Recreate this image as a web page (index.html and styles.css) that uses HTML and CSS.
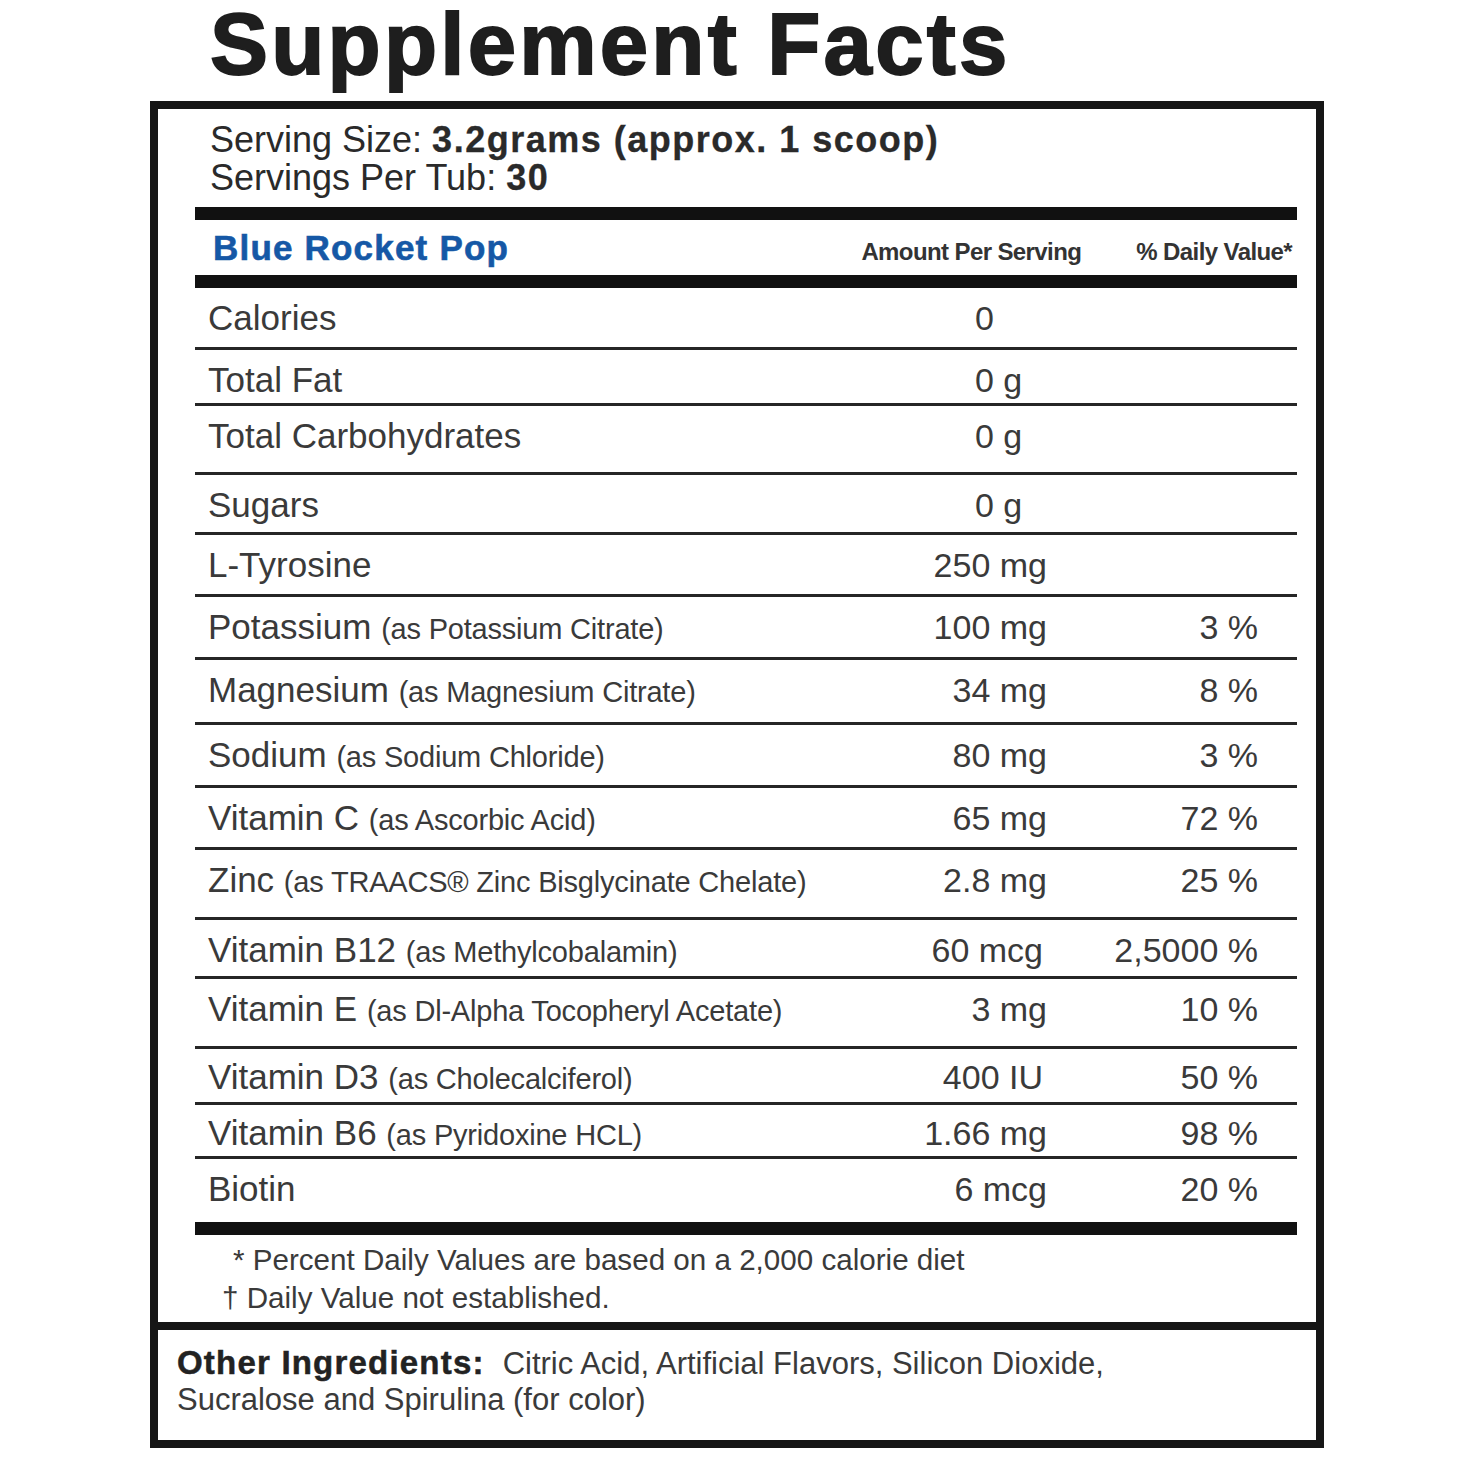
FILE: index.html
```html
<!DOCTYPE html>
<html lang="en">
<head>
<meta charset="utf-8">
<title>Supplement Facts</title>
<link rel="stylesheet" href="styles.css">
</head>
<body>
<div class="page">
  <h1 class="title">Supplement Facts</h1>
  <div class="label">
    <section class="facts">
      <div class="serving">
        <div class="serving-line">Serving Size: <b>3.2grams (approx. 1 scoop)</b></div>
        <div class="serving-line">Servings Per Tub: <b>30</b></div>
      </div>
      <div class="bar"></div>
      <div class="head">
        <span class="flavor">Blue Rocket Pop</span>
        <span class="h-amt">Amount Per Serving</span>
        <span class="h-dv">% Daily Value*</span>
      </div>
      <div class="bar"></div>
      <div class="rows">
        <div class="row"><span class="name">Calories</span><span class="amt amt-l">0</span><span class="dv"></span></div>
        <div class="row"><span class="name">Total Fat</span><span class="amt amt-l">0 g</span><span class="dv"></span></div>
        <div class="row"><span class="name">Total Carbohydrates</span><span class="amt amt-l">0 g</span><span class="dv"></span></div>
        <div class="row"><span class="name">Sugars</span><span class="amt amt-l">0 g</span><span class="dv"></span></div>
        <div class="row"><span class="name">L-Tyrosine</span><span class="amt">250 mg</span><span class="dv"></span></div>
        <div class="row"><span class="name">Potassium <small>(as Potassium Citrate)</small></span><span class="amt">100 mg</span><span class="dv">3 %</span></div>
        <div class="row"><span class="name">Magnesium <small>(as Magnesium Citrate)</small></span><span class="amt">34 mg</span><span class="dv">8 %</span></div>
        <div class="row"><span class="name">Sodium <small>(as Sodium Chloride)</small></span><span class="amt">80 mg</span><span class="dv">3 %</span></div>
        <div class="row"><span class="name">Vitamin C <small>(as Ascorbic Acid)</small></span><span class="amt">65 mg</span><span class="dv">72 %</span></div>
        <div class="row"><span class="name">Zinc <small>(as TRAACS® Zinc Bisglycinate Chelate)</small></span><span class="amt">2.8 mg</span><span class="dv">25 %</span></div>
        <div class="row"><span class="name">Vitamin B12 <small>(as Methylcobalamin)</small></span><span class="amt amt-r4">60 mcg</span><span class="dv">2,5000 %</span></div>
        <div class="row"><span class="name">Vitamin E <small>(as Dl-Alpha Tocopheryl Acetate)</small></span><span class="amt">3 mg</span><span class="dv">10 %</span></div>
        <div class="row row-high"><span class="name">Vitamin D3 <small>(as Cholecalciferol)</small></span><span class="amt amt-r4">400 IU</span><span class="dv">50 %</span></div>
        <div class="row row-high"><span class="name">Vitamin B6 <small>(as Pyridoxine HCL)</small></span><span class="amt">1.66 mg</span><span class="dv">98 %</span></div>
        <div class="row row-last"><span class="name">Biotin</span><span class="amt">6 mcg</span><span class="dv">20 %</span></div>
      </div>
      <div class="bar"></div>
      <div class="notes">
        <div class="note note-star">* Percent Daily Values are based on a 2,000 calorie diet</div>
        <div class="note note-dagger">† Daily Value not established.</div>
      </div>
    </section>
    <section class="other">
      <p class="other-text"><b class="other-label">Other Ingredients:</b>Citric Acid, Artificial Flavors, Silicon Dioxide,<br>Sucralose and Spirulina (for color)</p>
    </section>
  </div>
</div>
</body>
</html>
```

FILE: styles.css
```css
* { box-sizing: border-box; }

html, body {
  margin: 0;
  padding: 0;
  background: #ffffff;
}

body {
  font-family: "Liberation Sans", Arial, Helvetica, sans-serif;
  color: #383838;
}

.page {
  width: 1174px;
  margin-left: 150px;
}

.title {
  margin: 0;
  padding-left: 60px;
  height: 101px;
  font-size: 87px;
  line-height: 87px;
  font-weight: 700;
  letter-spacing: 3.2px;
  color: #1e1e1e;
  -webkit-text-stroke: 1.8px #1e1e1e;
  white-space: nowrap;
}

.label {
  width: 1174px;
  height: 1347px;
  border: 8px solid #161616;
  display: flex;
  flex-direction: column;
}

.facts {
  height: 1221px;
  flex: none;
  padding: 0 19px 0 37px;
  border-bottom: 8px solid #161616;
  display: flex;
  flex-direction: column;
}

.serving {
  padding: 12px 0 0 15px;
  height: 98px;
  flex: none;
  color: #2a2a2a;
}

.serving-line {
  font-size: 36px;
  line-height: 38px;
  white-space: nowrap;
}

.serving-line b {
  font-weight: 700;
  letter-spacing: 1.5px;
  -webkit-text-stroke: 0.3px #2a2a2a;
}

.bar {
  height: 13px;
  flex: none;
  background: #111111;
}

.head {
  height: 55px;
  flex: none;
  display: flex;
  align-items: baseline;
  padding: 8px 5px 0 18px;
}

.flavor {
  font-size: 35px;
  line-height: 40px;
  font-weight: 700;
  color: #1558a6;
  letter-spacing: 1.2px;
  -webkit-text-stroke: 0.6px #1558a6;
}

.h-amt,
.h-dv {
  font-size: 24px;
  line-height: 30px;
  font-weight: 700;
  letter-spacing: -0.6px;
  color: #333333;
}

.h-amt {
  margin-left: auto;
}

.h-dv {
  margin-left: 55px;
}

.rows {
  flex: none;
  display: grid;
  grid-template-rows: 62px 56px 69px 60px 62px 63px 65px 63px 62px 70px 59px 70px 56px 54px 63px;
}

.row {
  display: grid;
  grid-template-columns: 1fr 160px 211px;
  align-items: baseline;
  padding: 10px 39px 0 13px;
  border-bottom: 3px solid #262626;
}

.row-high {
  padding-top: 8px;
}

.row-last {
  border-bottom: none;
}

.name {
  font-size: 35px;
  line-height: 40px;
  white-space: nowrap;
  color: #3a3a3a;
}

.name small {
  font-size: 29px;
  letter-spacing: -0.2px;
}

.amt,
.dv {
  font-size: 34px;
  line-height: 40px;
  text-align: right;
  white-space: nowrap;
  color: #3a3a3a;
}

.amt-l {
  text-align: left;
  padding-left: 88px;
}

.amt-r4 {
  padding-right: 4px;
}

.notes {
  padding-top: 6px;
  color: #3a3a3a;
}

.note {
  font-size: 29.6px;
  line-height: 38px;
  white-space: nowrap;
}

.note-star {
  padding-left: 38px;
}

.note-dagger {
  padding-left: 27px;
}

.other {
  flex: 1;
  padding: 15px 19px 0 19px;
}

.other-text {
  margin: 0;
  font-size: 31px;
  line-height: 36px;
  color: #3a3a3a;
  white-space: nowrap;
}

.other-label {
  font-size: 33px;
  font-weight: 700;
  letter-spacing: 1.2px;
  color: #222222;
  -webkit-text-stroke: 0.5px #222222;
  margin-right: 18px;
}
```
